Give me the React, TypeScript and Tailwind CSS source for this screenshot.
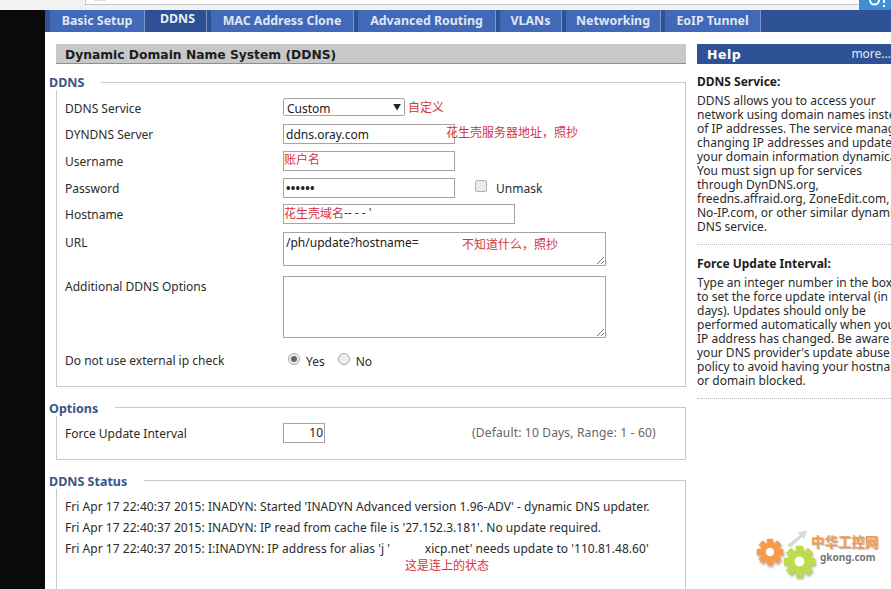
const tabs = [
  { t: "Basic Setup", w: "w-[95px]" },
  { t: "DDNS", w: "w-[58px]", active: true },
  { t: "MAC Address Clone", w: "w-[143px]" },
  { t: "Advanced Routing", w: "w-[138px]" },
  { t: "VLANs", w: "w-[62px]" },
  { t: "Networking", w: "w-[95px]" },
  { t: "EoIP Tunnel", w: "w-[96px]" },
];

const font = "font-['Noto_Sans','Noto_Sans_CJK_SC',sans-serif]";
const heading = "font-['DejaVu_Sans',sans-serif]";
const inputCls = "border border-[#a5a5a5] bg-white h-[20px] px-[2px] text-[12px] text-[#222] leading-[20px]";

function Gear({ fill, size }: { fill: string; size: number }) {
  const teeth = Array.from({ length: 8 }, (_, i) => i * 45);
  return (
    <svg width={size} height={size} viewBox="0 0 40 40" className="drop-shadow-[1px_2px_1px_rgba(0,0,0,0.3)]">
      {teeth.map((a) => (
        <rect key={a} x="15.5" y="1" width="9" height="10" rx="1" fill={fill} transform={`rotate(${a} 20 20)`} />
      ))}
      <circle cx="20" cy="20" r="13.5" fill={fill} />
      <circle cx="20" cy="20" r="6" fill="#fff" />
    </svg>
  );
}

function Row({ label, children, className }: { label: string; children?: React.ReactNode; className?: string }) {
  return (
    <div className={`flex items-start ${className ?? ""}`}>
      <div className="w-[218px] shrink-0 text-[12px] leading-[18px] text-[#2b2b2b] pt-[2px]">{label}</div>
      {children}
    </div>
  );
}

function Legend({ children, className }: { children: React.ReactNode; className: string }) {
  return (
    <legend className={`-ml-[16px] pr-[17px] text-[12.5px] font-bold leading-[14px] text-[#3c5488] ${className}`}>{children}</legend>
  );
}

function Note({ className, children }: { className: string; children: React.ReactNode }) {
  return <span className={`absolute text-[12px] leading-[14px] text-[#d6333c] whitespace-nowrap ${className}`}>{children}</span>;
}

function Grip() {
  return (
    <svg className="absolute right-0 bottom-0" width="9" height="9" viewBox="0 0 9 9">
      <path d="M1 8 8 1M5 8 8 5" stroke="#777" fill="none" />
    </svg>
  );
}

export default function App() {
  return (
    <div className={`relative w-[891px] h-[589px] overflow-hidden bg-white flex flex-col ${font}`}>
      <div className="h-[10px] shrink-0 bg-[#f2f2f2] relative flex">
        <div className="ml-[85px] w-[773px] h-[5px] bg-white border-b border-l border-[#c4c4c4] pl-[8px]">
          <div className="w-[12px] h-[1px] bg-[#ddd]" />
        </div>
        <div className="absolute right-0 top-0 w-[32px] h-[10px] bg-[#3d8fd6]">
          <svg width="32" height="10" viewBox="0 0 32 10">
            <path d="M11 0a4.5 4.5 0 0 0 9 0" stroke="#fff" strokeWidth="2" fill="none" />
            <path d="M25 0v3M25 5v2" stroke="#fff" strokeWidth="2" fill="none" />
          </svg>
        </div>
      </div>
      <div className="flex flex-1 min-h-0">
        <div className="w-[45px] shrink-0 bg-[#0a0a0a]" />
        <div className="flex-1 min-w-0 flex flex-col">
          <div className="h-[22px] shrink-0 bg-[#2f5296] flex pl-[5px] gap-[4px]">
            {tabs.map((x) => (
              <div
                key={x.t}
                className={`${x.w} shrink-0 flex justify-center border-r border-[#7f97c8] text-[12.4px] font-bold ${
                  x.active ? "bg-[#2d4f93] text-[#e9edf6] items-start" : "bg-[#4169b8] text-[#dfe6f4] items-center"
                }`}
              >
                {x.t}
              </div>
            ))}
          </div>
          <div className="flex flex-1 min-h-0 pt-[12px]">
            <div className="w-[641px] shrink-0 pl-[11px] flex flex-col">
              <h2 className={`h-[20px] shrink-0 bg-[#c8c8c8] border-b border-[#8f8f8f] pl-[9px] pt-[1px] text-[12.3px] font-bold leading-[20px] text-[#1c1c1c] ${heading}`}>
                Dynamic Domain Name System (DDNS)
              </h2>
              <fieldset className="mt-[10px] border border-[#c9c9c9] pl-[8px] h-[313px] shrink-0">
                <Legend className="pt-[2px]">DDNS</Legend>
                <Row label="DDNS Service" className="mt-[8px] h-[26px]">
                  <div className="w-[122px] h-[18px] border border-[#a5a5a5] rounded-[2px] flex items-center justify-between px-[3px] text-[12px] leading-[20px] text-[#222]">
                    <span className="pt-[3px]">Custom</span>
                    <span className="text-[8px]">▼</span>
                  </div>
                </Row>
                <Row label="DYNDNS Server" className="h-[27px]">
                  <div className={`w-[172px] ${inputCls}`}>ddns.oray.com</div>
                </Row>
                <Row label="Username" className="h-[27px]">
                  <div className={`w-[172px] ${inputCls}`} />
                </Row>
                <Row label="Password" className="h-[26px]">
                  <div className={`w-[172px] ${inputCls} font-bold tracking-[0.3px]`}>••••••</div>
                  <div className="ml-[20px] mt-[2px] w-[12px] h-[12px] border border-[#b0b0b0] rounded-[2px] bg-[#ececec]" />
                  <span className="ml-[9px] mt-[2px] text-[12px] leading-[18px] text-[#2b2b2b]">Unmask</span>
                </Row>
                <Row label="Hostname" className="h-[28px]">
                  <div className={`w-[232px] ${inputCls}`} />
                </Row>
                <Row label="URL" className="h-[44px]">
                  <div className={`relative w-[323px] ${inputCls} h-[34px] leading-[16px]`}>
                    /ph/update?hostname=
                    <Grip />
                  </div>
                </Row>
                <Row label="Additional DDNS Options" className="h-[74px]">
                  <div className={`relative w-[323px] ${inputCls} h-[62px]`}>
                    <Grip />
                  </div>
                </Row>
                <Row label="Do not use external ip check">
                  <div className="flex items-center h-[20px] text-[12px] text-[#2b2b2b]">
                    <span className="ml-[5px] mb-[2px] w-[12px] h-[12px] rounded-full border border-[#a8a8a8] bg-[#eee] flex items-center justify-center">
                      <span className="w-[6px] h-[6px] rounded-full bg-[#666]" />
                    </span>
                    <span className="ml-[6px] mt-[4px]">Yes</span>
                    <span className="ml-[13px] mb-[2px] w-[12px] h-[12px] rounded-full border border-[#a8a8a8] bg-[#eee]" />
                    <span className="ml-[6px] mt-[4px]">No</span>
                  </div>
                </Row>
              </fieldset>
              <fieldset className="mt-[11px] border border-[#c9c9c9] pl-[8px] h-[62px] shrink-0">
                <Legend className="pt-[4px]">Options</Legend>
                <Row label="Force Update Interval" className="mt-[7px]">
                  <div className="w-[42px] h-[20px] border border-[#a5a5a5] text-right pr-[1px] text-[12px] leading-[18px] text-[#222]">10</div>
                  <div className="ml-[147px] text-[12px] leading-[18px] text-[#666] tracking-[0.17px] mt-[1px]">(Default: 10 Days, Range: 1 - 60)</div>
                </Row>
              </fieldset>
              <fieldset className="mt-[11px] border border-[#c9c9c9] pl-[8px] flex-1 min-h-[130px]">
                <Legend className="pt-[4px]">DDNS Status</Legend>
                <div className="mt-[7px] text-[12px] leading-[21px] tracking-[0.04px] text-[#2b2b2b] whitespace-nowrap">
                  <div>Fri Apr 17 22:40:37 2015: INADYN: Started 'INADYN Advanced version 1.96-ADV' - dynamic DNS updater.</div>
                  <div>Fri Apr 17 22:40:37 2015: INADYN: IP read from cache file is '27.152.3.181'. No update required.</div>
                  <div>Fri Apr 17 22:40:37 2015: I:INADYN: IP address for alias 'j '&nbsp;&nbsp;&nbsp;&nbsp;&nbsp;&nbsp;&nbsp;&nbsp;&nbsp;&nbsp;&nbsp;xicp.net' needs update to '110.81.48.60'</div>
                </div>
              </fieldset>
            </div>
            <aside className="ml-[11px] flex-1 min-w-0 overflow-hidden whitespace-nowrap text-[12px] leading-[14px] text-[#2b2b2b]">
              <div className="h-[20px] bg-[#2f5296] flex justify-between items-center pl-[10px] text-white">
                <span className={`font-bold text-[12.5px] tracking-[0.5px] pt-[1px] ${heading}`}>Help</span>
                <span className="text-[12px] text-[#e4e9f4]">more...</span>
              </div>
              <h3 className="mt-[11px] font-bold text-[12px] text-[#1c1c1c]">DDNS Service:</h3>
              <p className="mt-[5px]">
                DDNS allows you to access your<br />
                network using domain names instead<br />
                of IP addresses. The service manages<br />
                changing IP addresses and updates<br />
                your domain information dynamically.<br />
                You must sign up for services<br />
                through DynDNS.org,<br />
                freedns.affraid.org, ZoneEdit.com,<br />
                No-IP.com, or other similar dynamic<br />
                DNS service.
              </p>
              <div className="mt-[10px] border-t border-dotted border-[#bbb]" />
              <h3 className="mt-[12px] font-bold text-[12px] text-[#1c1c1c]">Force Update Interval:</h3>
              <p className="mt-[5px]">
                Type an integer number in the box<br />
                to set the force update interval (in<br />
                days). Updates should only be<br />
                performed automatically when your<br />
                IP address has changed. Be aware of<br />
                your DNS provider's update abuse<br />
                policy to avoid having your hostname<br />
                or domain blocked.
              </p>
              <div className="mt-[10px] border-t border-dotted border-[#bbb]" />
            </aside>
          </div>
        </div>
      </div>

      <Note className="left-[408px] top-[101px]">自定义</Note>
      <Note className="left-[446px] top-[126px]">花生壳服务器地址，照抄</Note>
      <Note className="left-[284px] top-[153px]">账户名</Note>
      <Note className="left-[284px] top-[207px]">花生壳域名</Note>
      <span className="absolute left-[344px] top-[206px] text-[12px] leading-[14px] text-[#333]">-- - - '</span>
      <Note className="left-[462px] top-[238px]">不知道什么，照抄</Note>
      <Note className="left-[405px] top-[559px]">这是连上的状态</Note>

      <div className="absolute left-[756px] top-[528px] w-[126px] h-[54px] flex items-center">
        <div className="absolute left-0 top-[10px]"><Gear fill="#f79a4b" size={28} /></div>
        <div className="absolute left-[27px] top-[17px]"><Gear fill="#bcdc4a" size={33} /></div>
        <svg className="absolute left-[29px] top-[1px]" width="24" height="20" viewBox="0 0 24 20">
          <path d="M2 16 15 6l-2-3 9-1-3 8-2-2L5 19Z" fill="#d9d9d9" />
        </svg>
        <div className="absolute left-[55px] top-[7px] text-[13.5px] font-bold leading-[14px] text-[#f79a4b] whitespace-nowrap [text-shadow:1px_1px_1px_rgba(0,0,0,0.3)]">中华工控网</div>
        <div className="absolute left-[64px] top-[23px] text-[10px] font-bold leading-[13px] text-[#777] whitespace-nowrap">gkong.com</div>
      </div>
    </div>
  );
}
